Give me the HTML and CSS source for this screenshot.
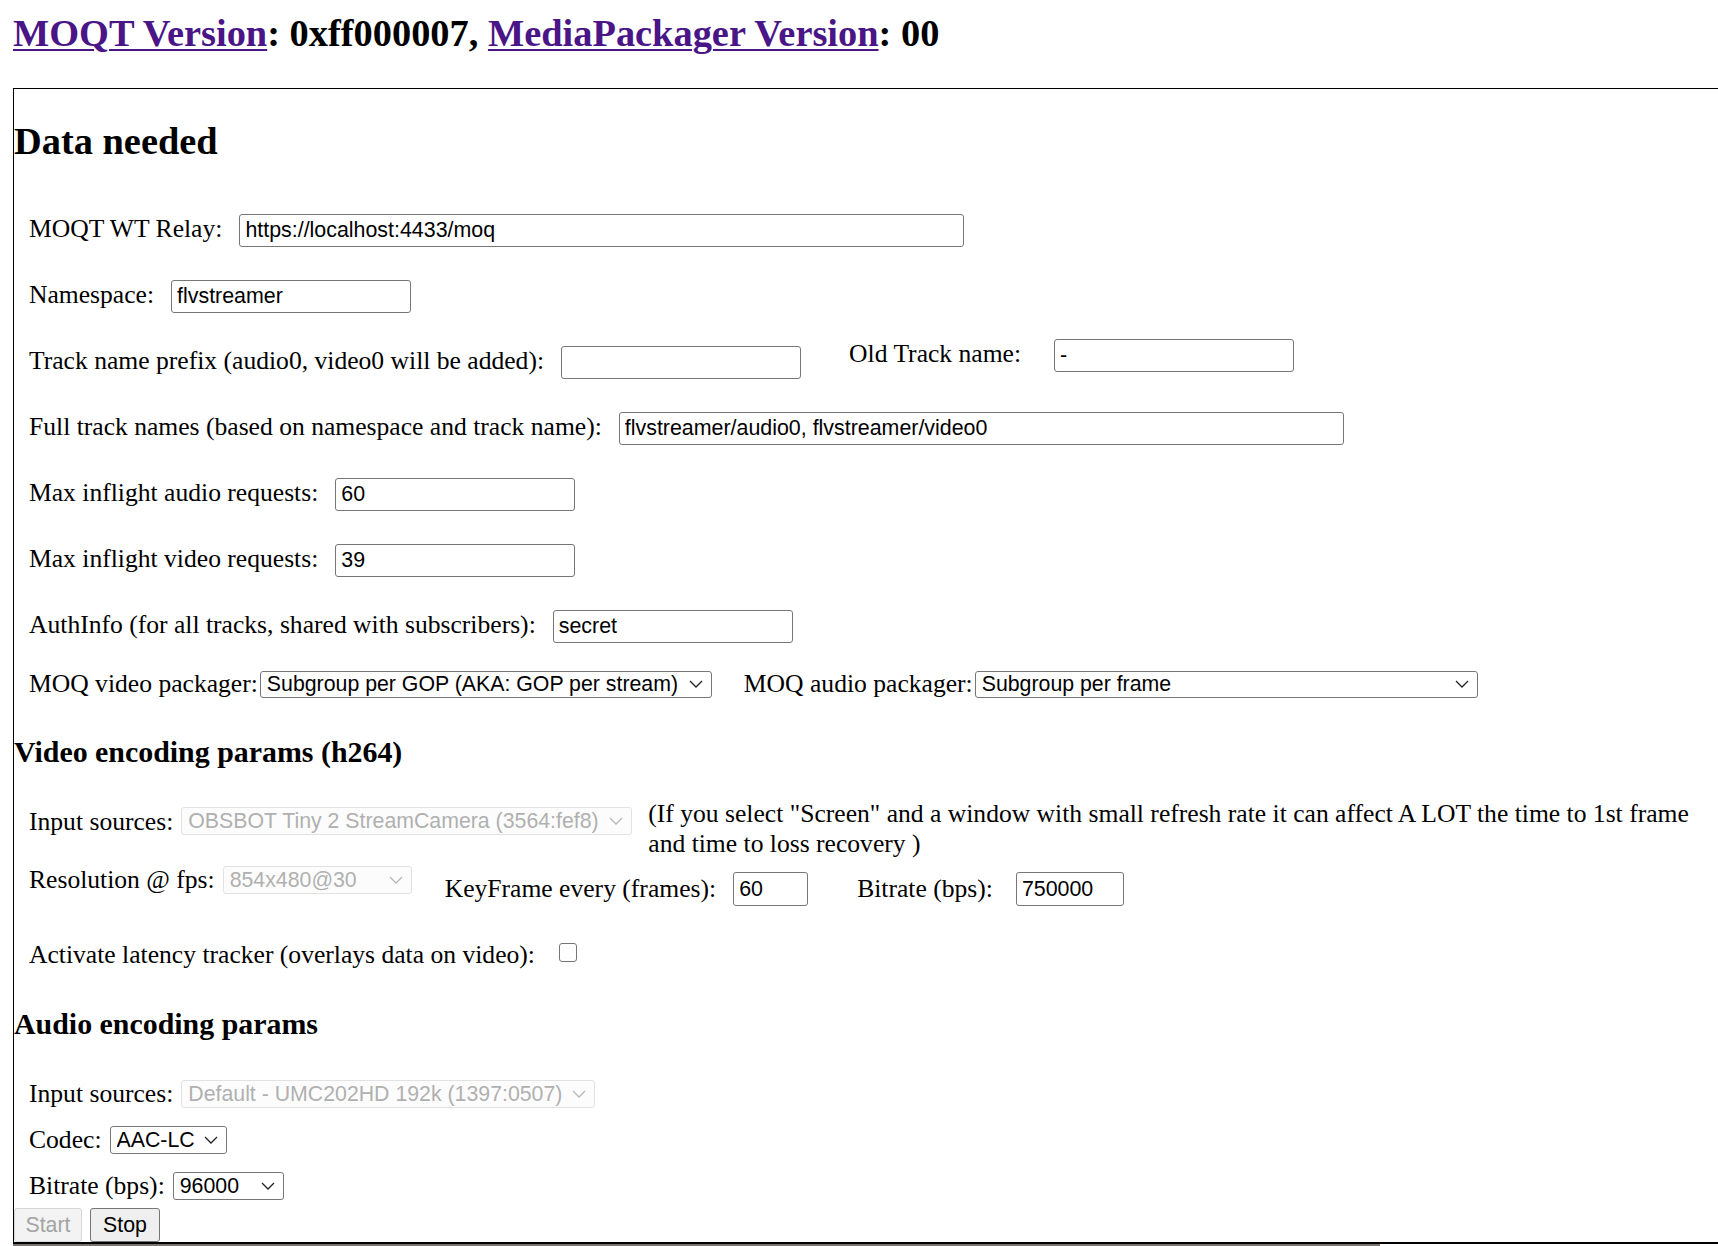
FILE: index.html
```html
<!DOCTYPE html>
<html>
<head>
<meta charset="utf-8">
<title>MOQT encoder</title>
<link rel="stylesheet" href="styles.css">
</head>
<body>
<h1 class="title"><a href="#" class="link">MOQT Version</a>: 0xff000007, <a href="#" class="link">MediaPackager Version</a>: 00</h1>
<div class="panel">
  <h2 class="sec-title">Data needed</h2>

  <div class="row row-first">
    <span class="lbl">MOQT WT Relay:</span>
    <input class="txt w-725" value="https://localhost:4433/moq">
  </div>
  <div class="row">
    <span class="lbl">Namespace:</span>
    <input class="txt w-240" value="flvstreamer">
  </div>
  <div class="row row-top">
    <div class="grp">
      <span class="lbl">Track name prefix (audio0, video0 will be added):</span>
      <input class="txt w-240" value="">
    </div>
    <div class="grp grp-old">
      <span class="lbl lbl-wide">Old Track name:</span>
      <input class="txt w-240" value="-">
    </div>
  </div>
  <div class="row">
    <span class="lbl">Full track names (based on namespace and track name):</span>
    <input class="txt w-725" value="flvstreamer/audio0, flvstreamer/video0">
  </div>
  <div class="row">
    <span class="lbl">Max inflight audio requests:</span>
    <input class="txt w-240" value="60">
  </div>
  <div class="row">
    <span class="lbl">Max inflight video requests:</span>
    <input class="txt w-240" value="39">
  </div>
  <div class="row">
    <span class="lbl">AuthInfo (for all tracks, shared with subscribers):</span>
    <input class="txt w-240" value="secret">
  </div>
  <div class="row row-sel row-pack">
    <span class="lbl lbl-tight">MOQ video packager:</span>
    <select class="sel w-452"><option>Subgroup per GOP (AKA: GOP per stream)</option></select>
    <span class="lbl lbl-tight lbl-gap">MOQ audio packager:</span>
    <select class="sel w-503"><option>Subgroup per frame</option></select>
  </div>

  <h3 class="sub-title sub-video">Video encoding params (h264)</h3>

  <div class="row row-top row-src">
    <span class="lbl lbl-near off-8">Input sources:</span>
    <select class="sel sel-dis w-451 off-8" disabled><option>OBSBOT Tiny 2 StreamCamera (3564:fef8)</option></select>
    <span class="note">(If you select "Screen" and a window with small refresh rate it can affect A LOT the time to 1st frame and time to loss recovery )</span>
  </div>
  <div class="row row-top row-res">
    <span class="lbl lbl-near">Resolution @ fps:</span>
    <select class="sel sel-dis w-189 off-1" disabled><option>854x480@30</option></select>
    <span class="lbl off-9 gap-33">KeyFrame every (frames):</span>
    <input class="txt txt-34 w-75 off-7" value="60">
    <span class="lbl lbl-br off-9 gap-49">Bitrate (bps):</span>
    <input class="txt txt-34 w-108 off-7" value="750000">
  </div>
  <div class="row row-top row-chk">
    <span class="lbl lbl-chk">Activate latency tracker (overlays data on video):</span>
    <input type="checkbox" class="chk off-3">
  </div>

  <h3 class="sub-title sub-audio">Audio encoding params</h3>

  <div class="row row-sel row-asrc">
    <span class="lbl lbl-near">Input sources:</span>
    <select class="sel sel-dis sel-29 w-414" disabled><option>Default - UMC202HD 192k (1397:0507)</option></select>
  </div>
  <div class="row row-sel row-small">
    <span class="lbl lbl-near">Codec:</span>
    <select class="sel sel-28 w-117"><option>AAC-LC</option></select>
  </div>
  <div class="row row-sel row-small">
    <span class="lbl lbl-near">Bitrate (bps):</span>
    <select class="sel sel-28 w-111"><option>96000</option></select>
  </div>

  <div class="actions">
    <button class="btn btn-start" disabled>Start</button>
    <button class="btn btn-stop">Stop</button>
  </div>
</div>
<div class="strip"></div>
</body>
</html>
```

FILE: styles.css
```css
* { box-sizing: border-box; }

html, body {
  margin: 0;
  padding: 0;
  background: #ffffff;
}

body {
  font-family: "Liberation Serif", "Times New Roman", serif;
  font-size: 25.6px;
  line-height: 30px;
  color: #000;
  padding: 12px 0 0 13px;
  overflow: hidden;
}

.title {
  margin: 0;
  font-size: 38.4px;
  line-height: 43px;
  font-weight: bold;
  white-space: nowrap;
}

.link {
  color: #4a1586;
  text-decoration: underline;
  text-decoration-thickness: 2px;
  text-underline-offset: 3px;
}

.panel {
  margin-top: 33px;
  border-top: 1px solid #000;
  border-left: 1px solid #000;
  border-bottom: 2px solid #000;
}

.sec-title {
  margin: 31px 0 0;
  font-size: 38.4px;
  line-height: 43px;
  font-weight: bold;
}

.sub-title {
  margin: 0;
  font-size: 29.9px;
  line-height: 34px;
  font-weight: bold;
}

.sub-video { margin-top: 36px; }
.sub-audio { margin-top: 37px; }

.row {
  display: flex;
  align-items: baseline;
  padding-left: 15px;
  margin-top: 33px;
  white-space: nowrap;
}

.row-first { margin-top: 51px; }
.row-top { align-items: flex-start; }
.row-sel { align-items: center; }
.row-pack { margin-top: 26px; }
.row-src { margin-top: 30px; }
.row-res { margin-top: 6px; }
.row-chk { margin-top: 34px; }
.row-asrc { margin-top: 38px; }
.row-small { margin-top: 16px; }

.grp {
  display: flex;
  align-items: baseline;
}

.grp-old {
  margin-top: -7px;
  margin-left: 48px;
}

.lbl { margin-right: 17px; }
.lbl-wide { margin-right: 33px; }
.lbl-tight { margin-right: 2px; }
.lbl-gap { margin-left: 32px; }
.lbl-near { margin-right: 8px; }
.lbl-br { margin-right: 23px; }
.lbl-chk { margin-right: 24px; }

.gap-33 { margin-left: 33px; }
.gap-49 { margin-left: 49px; }

.txt {
  height: 33px;
  padding: 0 5px;
  border: 1px solid #767676;
  border-radius: 3px;
  background: #fff;
  color: #000;
  font-family: "Liberation Sans", Arial, sans-serif;
  font-size: 21.4px;
}

.txt-34 { height: 34px; }

.w-725 { width: 725px; }
.w-240 { width: 240px; }
.w-75 { width: 75px; }
.w-108 { width: 108px; }
.w-452 { width: 452px; }
.w-503 { width: 503px; }
.w-451 { width: 451px; }
.w-189 { width: 189px; }
.w-414 { width: 414px; }
.w-117 { width: 117px; }
.w-111 { width: 111px; }

.sel {
  -webkit-appearance: none;
  appearance: none;
  height: 27px;
  padding: 0 30px 0 6px;
  border: 1px solid #767676;
  border-radius: 3px;
  color: #000;
  font-family: "Liberation Sans", Arial, sans-serif;
  font-size: 21.3px;
  background-color: #fff;
  background-image: url("data:image/svg+xml;utf8,<svg xmlns='http://www.w3.org/2000/svg' width='14' height='8' viewBox='0 0 14 8'><path d='M1 1 L7 7 L13 1' fill='none' stroke='%23222' stroke-width='1.3'/></svg>");
  background-repeat: no-repeat;
  background-position: right 8px center;
}

.sel-28 { height: 28px; }
.sel-29 { height: 29px; }

.sel-dis {
  height: 28px;
  color: #8f8f8f;
  border-color: #d6d6d6;
  background-color: #fbfbfb;
  background-image: url("data:image/svg+xml;utf8,<svg xmlns='http://www.w3.org/2000/svg' width='14' height='8' viewBox='0 0 14 8'><path d='M1 1 L7 7 L13 1' fill='none' stroke='%23999' stroke-width='1.3'/></svg>");
}

.note {
  margin-left: 16px;
  white-space: normal;
  width: 1050px;
}

.chk {
  -webkit-appearance: none;
  appearance: none;
  width: 18px;
  height: 19px;
  border: 1px solid #767676;
  border-radius: 3px;
  background: #fff;
}

.actions {
  display: flex;
  gap: 8px;
  margin-top: 7px;
}

.btn {
  height: 34px;
  margin: 0;
  padding: 0;
  border: 1px solid #767676;
  border-radius: 3px;
  background: #efefef;
  color: #000;
  font-family: "Liberation Sans", Arial, sans-serif;
  font-size: 21.3px;
}

.btn-start { width: 68px; }
.btn-stop { width: 70px; }

.btn:disabled {
  color: #a3a3a3;
  border-color: #d6d6d6;
  background: #f3f3f3;
}

.strip {
  width: 1367px;
  height: 4px;
  background: #7c746c;
}

/* vertical offsets inside top-aligned rows (declared last so they win) */
.txt, .sel, .chk { margin: 0; }
.off-1 { margin-top: 1px; }
.off-3 { margin-top: 3px; }
.off-7 { margin-top: 7px; }
.off-8 { margin-top: 8px; }
.off-9 { margin-top: 9px; }
```
